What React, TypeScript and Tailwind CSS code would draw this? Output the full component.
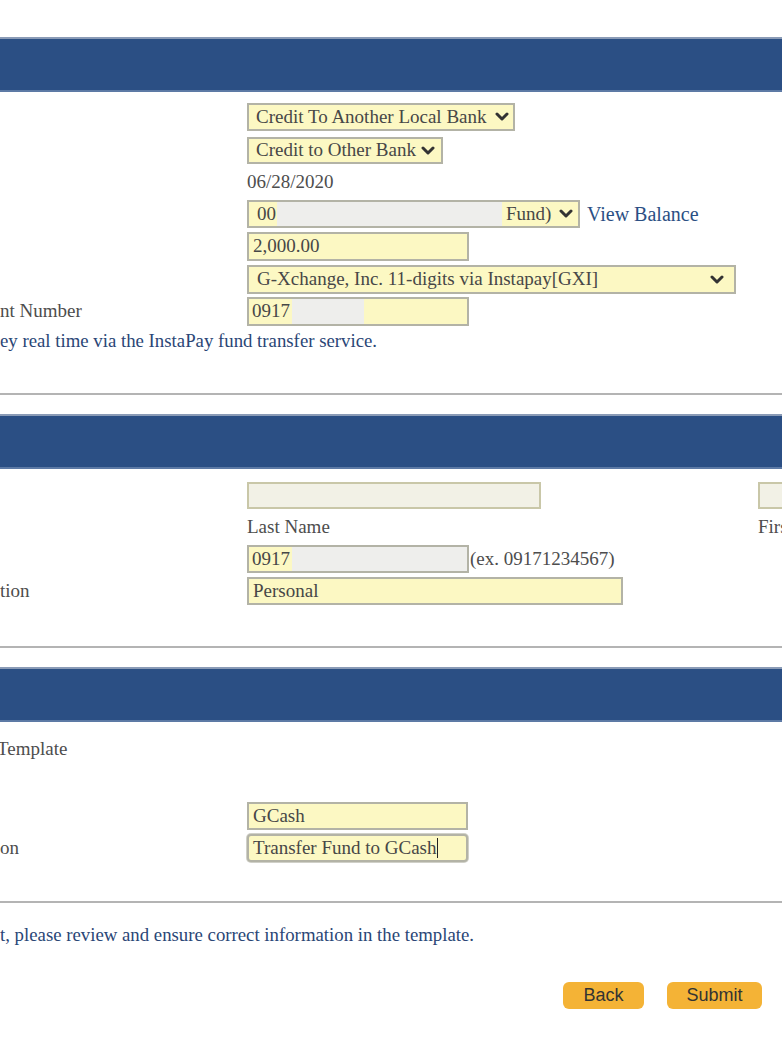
import React from 'react';

const Chevron = () => (
  <svg viewBox="0 0 14 10" className="w-[14px] h-[10px] shrink-0" aria-hidden>
    <polyline points="2,2 7,7 12,2" fill="none" stroke="#333" strokeWidth="3" strokeLinecap="round" strokeLinejoin="round" />
  </svg>
);

const Bar = () => (
  <div className="h-[55px] bg-[#2b4f84] border-t-2 border-t-[#8a9bb6] border-b-2 border-b-[#5d7aa5]" />
);

const Separator = () => <div className="h-[2px] bg-[#b4b4b4]" />;

// rij met label links (afgesneden) en veld rechts
const Row = ({ label, className = '', children }: { label?: string; className?: string; children?: React.ReactNode }) => (
  <div className={`flex items-center ${className}`}>
    <div className="w-[247px] shrink-0 whitespace-nowrap overflow-hidden">{label}</div>
    <div className="flex items-center h-full">{children}</div>
  </div>
);

const field = 'h-full shrink-0 flex items-center border-2 border-[#b3b3a6] bg-[#fcf8c3] text-[#474747] px-[4px] whitespace-nowrap overflow-hidden';

export default function App() {
  return (
    <div className="w-[782px] h-[1042px] overflow-hidden bg-white font-['Liberation_Serif',serif] text-[19px] text-[#4d4d4d]">
      <div className="h-[37px]" />
      <Bar />

      {/* Transfer details */}
      <Row className="mt-[11px] h-[28px]">
        <div className={`${field} w-[268px] gap-[8px] pl-[7px]`}>
          <span>Credit To Another Local Bank</span>
          <Chevron />
        </div>
      </Row>
      <Row className="mt-[6px] h-[27px]">
        <div className={`${field} w-[196px] gap-[5px] pl-[7px]`}>
          <span>Credit to Other Bank</span>
          <Chevron />
        </div>
      </Row>
      <Row className="mt-[4px] h-[28px]">
        <span>06/28/2020</span>
      </Row>
      <Row className="mt-[4px] h-[28px]">
        <div className={`${field} w-[333px] !px-0`}>
          <span className="pl-[8px] w-[28px] shrink-0">00</span>
          <div className="h-full w-[225px] shrink-0 bg-[#eeeeec]" />
          <span className="pl-[4px]">Fund)</span>
          <span className="ml-[8px]"><Chevron /></span>
        </div>
        <span className="ml-[7px] text-[20px] text-[#2b4f84]">View Balance</span>
      </Row>
      <Row className="mt-[4px] h-[29px]">
        <div className={`${field} w-[222px]`}>2,000.00</div>
      </Row>
      <Row className="mt-[4px] h-[29px]">
        <div className={`${field} w-[489px] justify-between pl-[8px] pr-[10px]`}>
          <span>G-Xchange, Inc. 11-digits via Instapay[GXI]</span>
          <Chevron />
        </div>
      </Row>
      <Row label="nt Number" className="mt-[3px] h-[29px]">
        <div className={`${field} w-[222px] !px-0`}>
          <span className="pl-[3px] w-[43px] shrink-0">0917</span>
          <div className="h-full w-[72px] shrink-0 bg-[#eeeeec]" />
        </div>
      </Row>
      <div className="mt-[2px] h-[26px] flex items-center whitespace-nowrap text-[#2a4676] text-[18.8px]">
        ey real time via the InstaPay fund transfer service.
      </div>

      <div className="h-[39px]" />
      <Separator />
      <div className="h-[19px]" />
      <Bar />

      {/* Recipient */}
      <div className="mt-[13px] h-[27px] flex">
        <div className="w-[247px] shrink-0" />
        <div className={`${field} w-[294px] !bg-[#f2f1e6] border-[#c9c7a8]`} />
        <div className="w-[217px] shrink-0" />
        <div className={`${field} w-[40px] !bg-[#f2f1e6] border-[#c9c7a8]`} />
      </div>
      <div className="mt-[4px] h-[28px] flex items-center whitespace-nowrap">
        <div className="w-[247px] shrink-0" />
        <span className="w-[511px] shrink-0">Last Name</span>
        <span>First Name</span>
      </div>
      <Row className="mt-[4px] h-[28px]">
        <div className={`${field} w-[222px] !px-0`}>
          <span className="pl-[3px] w-[43px] shrink-0">0917</span>
          <div className="h-full flex-1 bg-[#eeeeec]" />
        </div>
        <span className="ml-[1px] whitespace-nowrap">(ex. 09171234567)</span>
      </Row>
      <Row label="tion" className="mt-[4px] h-[28px]">
        <div className={`${field} w-[376px]`}>Personal</div>
      </Row>

      <div className="h-[41px]" />
      <Separator />
      <div className="h-[19px]" />
      <Bar />

      {/* Template */}
      <div className="mt-[14px] h-[26px] flex items-center -ml-[3px]">Template</div>
      <Row className="mt-[40px] h-[28px]">
        <div className={`${field} w-[221px]`}>GCash</div>
      </Row>
      <Row label="on" className="mt-[4px] h-[28px]">
        <div className={`${field} w-[221px] rounded-[4px] border-[#a9a9a0] shadow-[0_0_0_1px_#d0d0c8]`}>
          <span>Transfer Fund to GCash</span>
          <span className="w-[1px] h-[20px] bg-[#222]" />
        </div>
      </Row>

      <div className="h-[39px]" />
      <Separator />
      <div className="mt-[19px] h-[26px] flex items-center whitespace-nowrap text-[#2a4676] text-[18.8px]">
        t, please review and ensure correct information in the template.
      </div>

      <div className="mt-[34px] flex justify-end gap-[23px] pr-[20px] font-['Liberation_Sans',sans-serif] text-[18px] text-[#333]">
        <button className="w-[81px] h-[27px] rounded-[6px] bg-[#f4b336] flex items-center justify-center">Back</button>
        <button className="w-[95px] h-[27px] rounded-[6px] bg-[#f4b336] flex items-center justify-center">Submit</button>
      </div>
    </div>
  );
}
